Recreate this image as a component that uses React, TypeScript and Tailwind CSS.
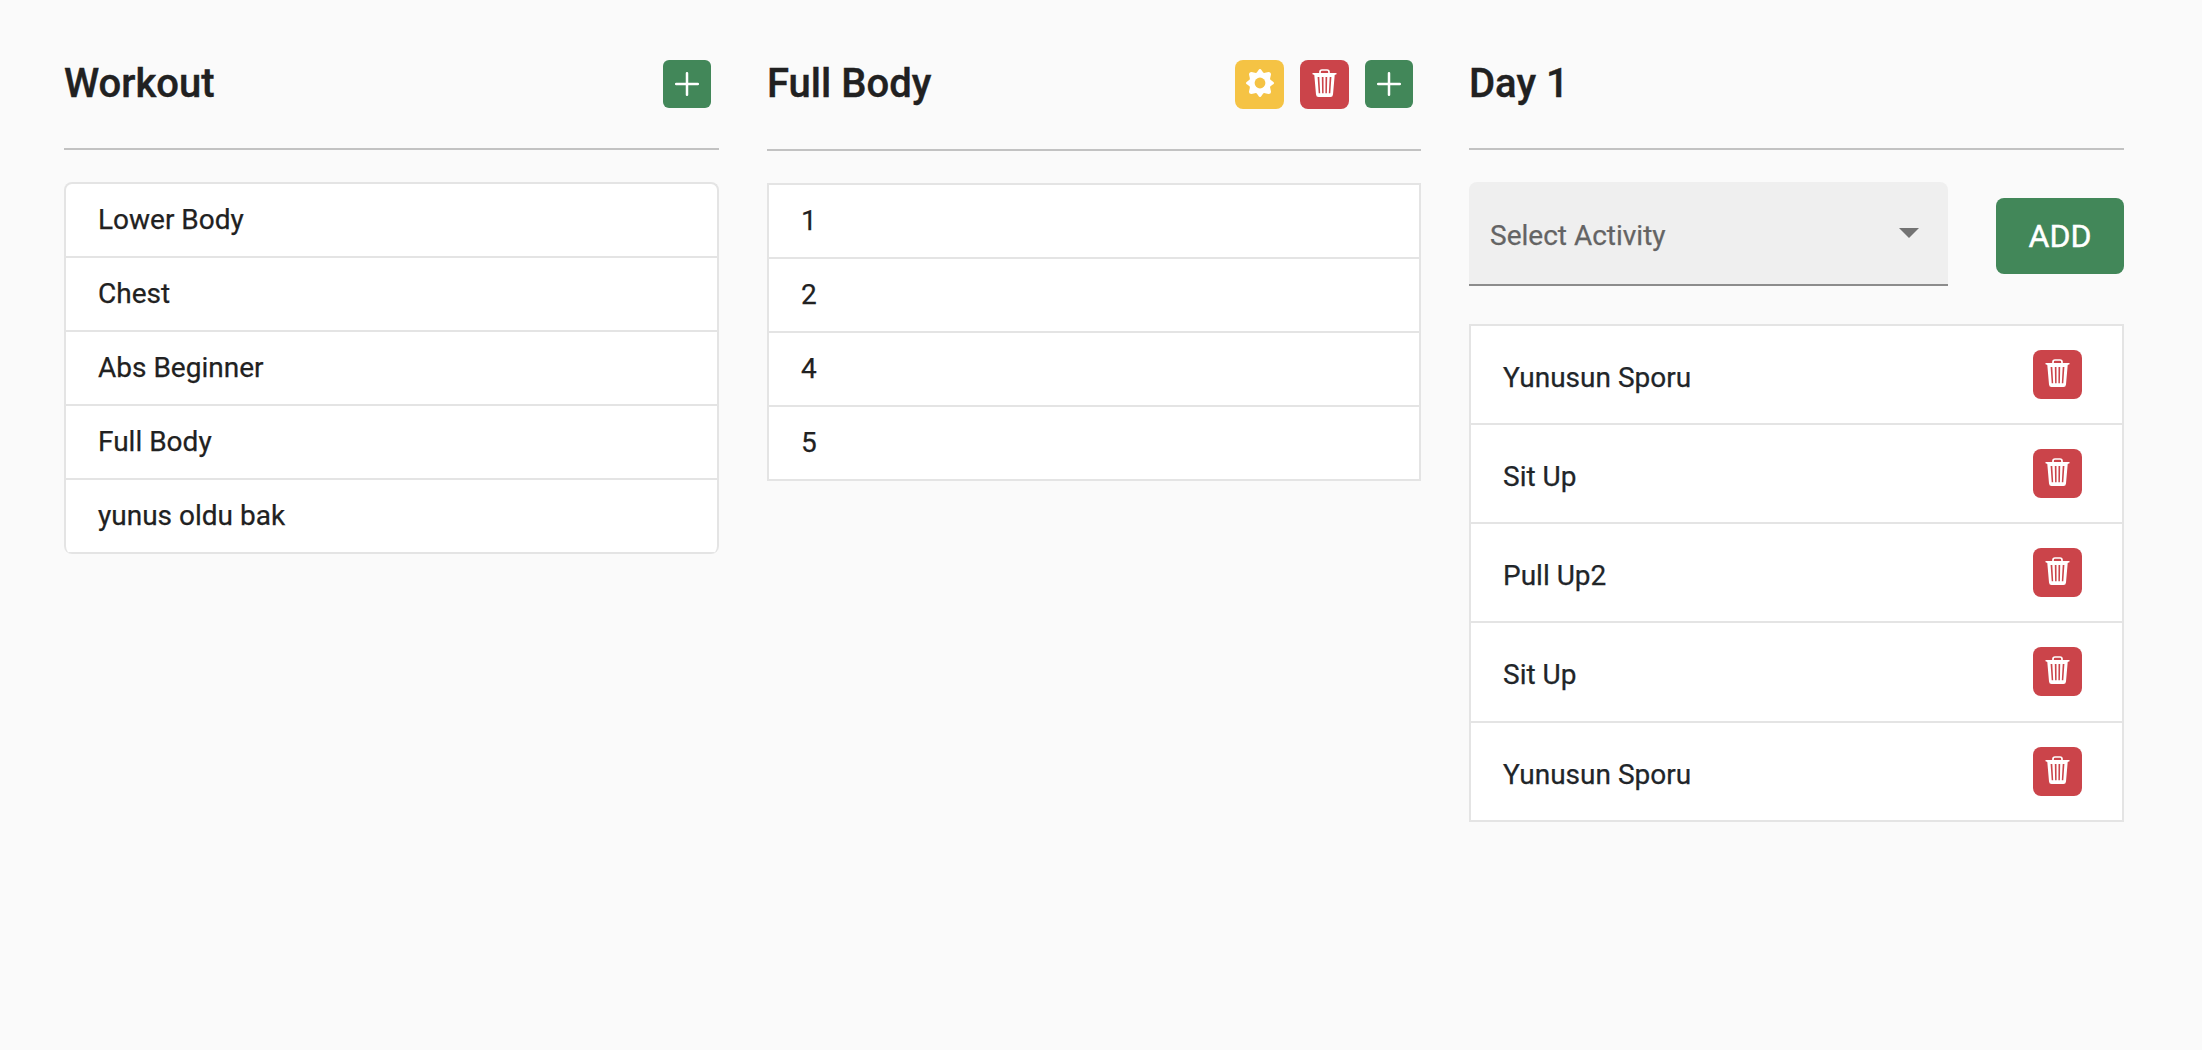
import React from "react";

const rule = "border-t-2 border-[#c2c2c2]";

function Plus() {
  return (
    <button className="flex size-12 items-center justify-center rounded-md bg-[#428759]">
      <svg width="24" height="24" viewBox="0 0 24 24" fill="none" stroke="#fff" strokeWidth="2.5" strokeLinecap="round">
        <path d="M12 1.2v21.6M1.2 12h21.6" />
      </svg>
    </button>
  );
}

function Trash() {
  return (
    <button className="flex size-[49px] shrink-0 justify-center rounded-lg bg-[#cb444a] pt-[9px]">
      <svg width="25" height="28" viewBox="0 0 25 28" fill="none">
        <path d="M8 4.500V3q0-2 2-2h5q2 0 2 2v1.500" stroke="#fff" strokeWidth="1.700" />
        <path fill="#fff" fillRule="evenodd" d="M.5 4h24v1.300l-1.800.6L21 25.500Q20.800 28 18.500 28H6.500Q4.200 28 4 25.500L2.300 5.900.5 5.300zM5.600 8l1.100 16.300h1.500L7.300 8zM9.800 8l.3 16.300h1.500L11.500 8zM13.500 8l-.1 16.300h1.500L15.200 8zM17.700 8l-.9 16.300h1.500l1.100-16.300z" />
      </svg>
    </button>
  );
}

function Gear() {
  return (
    <button className="flex size-[49px] justify-center rounded-lg bg-[#f5c344] pt-[9px]">
      <svg width="28" height="28" viewBox="0 0 28 28" fill="#fff">
        {[0, 90, 180, 270].map((a) => (
          <path key={a} transform={`rotate(${a} 14 14)`} d="M14 0Q15 0 15.600 1.200L17 3.200Q17.600 4.200 19 3.800L22.500 3Q25 3 25 5.500L24.200 9Q23.800 10.400 24.800 11L26.800 12.400Q28 13 28 14L14 14z" />
        ))}
        <circle cx="14" cy="14" r="5.400" fill="#f5c344" />
      </svg>
    </button>
  );
}

function Title({ children }: { children: React.ReactNode }) {
  return <h2 className="mt-[60px] text-[40px] leading-[48px] font-medium [-webkit-text-stroke:0.4px]">{children}</h2>;
}

function Row({ children }: { children: React.ReactNode }) {
  return <li className="h-[74px] border-b-2 border-[#e4e4e4] pl-8 leading-[72px]">{children}</li>;
}

export default function App() {
  const workouts = ["Lower Body", "Chest", "Abs Beginner", "Full Body", "yunus oldu bak"];
  const days = ["1", "2", "4", "5"];
  const activities = ["Yunusun Sporu", "Sit Up", "Pull Up2", "Sit Up", "Yunusun Sporu"];
  return (
    <main className="flex h-[1050px] w-[2202px] items-start gap-12 bg-[#fafafa] pl-16 font-[Roboto,sans-serif] text-[28px] text-[#212121] [-webkit-text-stroke:0.25px]">
      <section className="w-[655px]">
        <header className="flex h-[148px] items-start justify-between pr-2">
          <Title>Workout</Title>
          <div className="mt-[60px]"><Plus /></div>
        </header>
        <div className={rule} />
        <ul className="mt-8 overflow-hidden rounded-lg border-2 border-b-0 border-[#e4e4e4] bg-white">
          {workouts.map((w) => <Row key={w}>{w}</Row>)}
        </ul>
      </section>
      <section className="w-[654px]">
        <header className="flex h-[149px] items-start justify-between pr-2">
          <Title>Full Body</Title>
          <div className="mt-[60px] flex gap-4"><Gear /><Trash /><Plus /></div>
        </header>
        <div className={rule} />
        <ul className="mt-8 border-2 border-b-0 border-[#e4e4e4] bg-white">
          {days.map((d) => <Row key={d}>{d}</Row>)}
        </ul>
      </section>
      <section className="w-[655px]">
        <header className="flex h-[148px] items-start">
          <Title>Day 1</Title>
        </header>
        <div className={rule} />
        <div className="mt-8 flex items-center justify-between">
          <div className="flex h-[104px] w-[479px] items-center justify-between rounded-t-lg border-b-2 border-[#8c8c8c] bg-[#efefef] pr-[29px] pl-[21px] text-[#646464]">
            <span className="pt-1.5">Select Activity</span>
            <svg width="20" height="10" viewBox="0 0 20 10" fill="#737373"><path d="M0 0h20L10 10z" /></svg>
          </div>
          <button className="mt-1 h-[76px] w-32 rounded-lg bg-[#428759] text-[32px] text-white [-webkit-text-stroke:0.4px]">ADD</button>
        </div>
        <ul className="mt-[38px] border-2 border-b-0 border-[#e4e4e4] bg-white text-[#212529]">
          {activities.map((a, i) => (
            <li key={i} className="flex h-[99px] items-start justify-between border-b-2 border-[#e4e4e4] pt-6 pr-10 pl-8 nth-4:h-[100px]">
              <span className="pt-1 leading-[48px]">{a}</span>
              <Trash />
            </li>
          ))}
        </ul>
      </section>
    </main>
  );
}
